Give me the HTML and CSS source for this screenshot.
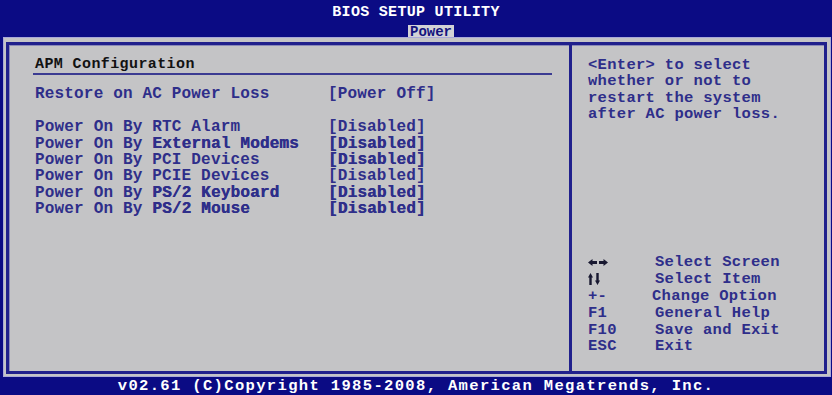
FILE: index.html
```html
<!DOCTYPE html>
<html>
<head>
<meta charset="utf-8">
<link rel="stylesheet" href="styles.css">
</head>
<body>
<div class="screen">
  <header class="top">
    <div class="title">BIOS SETUP UTILITY</div>
    <div class="tabs"><span class="tab">Power</span></div>
  </header>
  <main class="panel">
    <div class="frame">
      <section class="left">
        <div class="heading">APM Configuration</div>
        <div class="rule"></div>
        <div class="rows">
          <div class="row"><span class="lbl">Restore on AC Power Loss</span><span class="val">[Power Off]</span></div>
          <div class="row blank"></div>
          <div class="row"><span class="lbl">Power On By RTC Alarm</span><span class="val">[Disabled]</span></div>
          <div class="row"><span class="lbl">Power On By <b class="heavy">External Modems</b></span><span class="val heavy">[Disabled]</span></div>
          <div class="row"><span class="lbl">Power On By PCI Devices</span><span class="val heavy">[Disabled]</span></div>
          <div class="row"><span class="lbl">Power On By PCIE Devices</span><span class="val">[Disabled]</span></div>
          <div class="row"><span class="lbl">Power On By <b class="heavy">PS/2 Keyboard</b></span><span class="val heavy">[Disabled]</span></div>
          <div class="row"><span class="lbl">Power On By <b class="heavy">PS/2 Mouse</b></span><span class="val heavy">[Disabled]</span></div>
        </div>
      </section>
      <aside class="right">
        <div class="help">&lt;Enter&gt; to select<br>whether or not to<br>restart the system<br>after AC power loss.</div>
        <div class="keys">
          <span class="key"><svg class="ico" width="20" height="9" viewBox="0 0 20 9"><path d="M0 4.5 L4.5 1 L4.5 3 L9 3 L9 6 L4.5 6 L4.5 8 Z M20 4.5 L15.5 1 L15.5 3 L11 3 L11 6 L15.5 6 L15.5 8 Z" fill="#181830"/></svg></span><span class="desc">Select Screen</span>
          <span class="key"><svg class="ico" width="12" height="12" viewBox="0 0 12 12"><path d="M2.5 0 L0 4.5 L1.3 4.5 L1.3 12 L3.7 12 L3.7 4.5 L5 4.5 Z M9.5 12 L7 7.5 L8.3 7.5 L8.3 0 L10.7 0 L10.7 7.5 L12 7.5 Z" fill="#181830"/></svg></span><span class="desc">Select Item</span>
          <span class="key">+-</span><span class="desc shift">Change Option</span>
          <span class="key">F1</span><span class="desc">General Help</span>
          <span class="key">F10</span><span class="desc">Save and Exit</span>
          <span class="key">ESC</span><span class="desc">Exit</span>
        </div>
      </aside>
    </div>
  </main>
  <footer class="bottom">v02.61 (C)Copyright 1985-2008, American Megatrends, Inc.</footer>
</div>
</body>
</html>
```
FILE: styles.css
```css
html, body {
  margin: 0;
  padding: 0;
  background: #0b0b84;
}
.screen {
  width: 832px;
  height: 395px;
  display: flex;
  flex-direction: column;
  font-family: "Liberation Mono", "DejaVu Sans Mono", monospace;
  font-weight: bold;
  overflow: hidden;
}
.top {
  height: 37px;
  display: flex;
  flex-direction: column;
  align-items: center;
  color: #ffffff;
}
.title {
  font-size: 15px;
  letter-spacing: 0.3px;
  line-height: 17px;
  margin-top: 4px;
}
.tabs {
  margin-top: 2px;
  padding-left: 30px;
}
.tab {
  display: inline-block;
  background: #d2d2d6;
  color: #14147e;
  font-size: 14px;
  line-height: 13px;
  padding: 1px 2px 0 2px;
}
.panel {
  height: 340px;
  margin: 0 1px 0 3px;
  background: #c4c4c6;
  box-sizing: border-box;
  padding: 5px 4px 3px 3px;
  box-shadow: inset 1px 1px 0 #a9a9d8, inset -1px -1px 0 #a9a9d8;
}
.frame {
  height: 100%;
  box-sizing: border-box;
  border: 3px solid #20208c;
  box-shadow: inset 1px 1px 0 #8a8ab8;
  display: flex;
}
.left {
  border-right: 3px solid #20208c;
  padding: 12px 17px 0 26px;
  box-sizing: border-box;
  width: 563px;
  font-size: 16px;
  letter-spacing: 0.17px;
  line-height: 16.4px;
  color: #2e2e8a;
}
.heading {
  color: #121212;
  font-size: 15px;
  letter-spacing: 0.4px;
}
.rule {
  height: 2px;
  margin: 0 0 0 -2px;
  background: #3b3b92;
}
.rows {
  margin-top: 11px;
}
.row {
  display: flex;
  height: 16.4px;
  white-space: pre;
}
.lbl {
  width: 293px;
}
.heavy {
  text-shadow: 0.4px 0 0 currentColor;
}
.right {
  flex: 1;
  display: flex;
  flex-direction: column;
  padding: 12px 0 16px 16px;
  font-size: 15.5px;
  letter-spacing: 0.3px;
  line-height: 16.4px;
  color: #2e2e8a;
}
.help {
  white-space: pre;
}
.keys {
  margin-top: auto;
  display: grid;
  grid-template-columns: 67px auto;
  grid-auto-rows: 16.8px;
  align-items: center;
}
.key {
  display: flex;
  align-items: center;
}
.ico {
  display: block;
}
.desc.shift {
  margin-left: -3px;
}
.bottom {
  flex: 1;
  display: flex;
  align-items: center;
  justify-content: center;
  color: #ffffff;
  font-size: 15.5px;
  letter-spacing: 1.35px;
}
```
